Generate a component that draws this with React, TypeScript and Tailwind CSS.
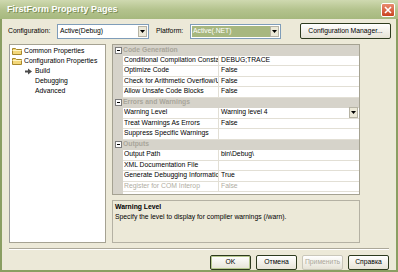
import React from 'react'

type Row =
  | { kind: 'cat'; label: string }
  | { kind: 'prop'; name: string; value: string; dim?: boolean; drop?: boolean }

const rows: Row[] = [
  { kind: 'cat', label: 'Code Generation' },
  { kind: 'prop', name: 'Conditional Compilation Constants', value: 'DEBUG;TRACE' },
  { kind: 'prop', name: 'Optimize Code', value: 'False' },
  { kind: 'prop', name: 'Check for Arithmetic Overflow/Underflow', value: 'False' },
  { kind: 'prop', name: 'Allow Unsafe Code Blocks', value: 'False' },
  { kind: 'cat', label: 'Errors and Warnings' },
  { kind: 'prop', name: 'Warning Level', value: 'Warning level 4', drop: true },
  { kind: 'prop', name: 'Treat Warnings As Errors', value: 'False' },
  { kind: 'prop', name: 'Suppress Specific Warnings', value: '' },
  { kind: 'cat', label: 'Outputs' },
  { kind: 'prop', name: 'Output Path', value: 'bin\\Debug\\' },
  { kind: 'prop', name: 'XML Documentation File', value: '' },
  { kind: 'prop', name: 'Generate Debugging Information', value: 'True' },
  { kind: 'prop', name: 'Register for COM Interop', value: 'False', dim: true },
]

function DropArrow() {
  return (
    <div className="flex h-[11px] w-[9px] items-center justify-center border border-[#b6b3a4] bg-[#ece9d8]">
      <svg width="5" height="3" viewBox="0 0 5 3">
        <path d="M0 0h5L2.5 3z" fill="#000" />
      </svg>
    </div>
  )
}

function Folder() {
  return (
    <svg width="10" height="8" viewBox="0 0 10 8" className="shrink-0">
      <path d="M0.5 1.5h3l1 1h5v5h-9z" fill="#f3d779" stroke="#a8882c" strokeWidth="1" />
      <path d="M0.5 3.5h9" stroke="#fff3c0" strokeWidth="1" />
    </svg>
  )
}

function Minus() {
  return (
    <div className="flex h-[7px] w-[7px] items-center justify-center border border-[#7b7b7b] bg-white">
      <div className="h-px w-[3px] bg-black" />
    </div>
  )
}

function XpButton({ label, disabled, primary }: { label: string; disabled?: boolean; primary?: boolean }) {
  return (
    <div
      className={`flex h-[15px] w-[41px] items-center justify-center rounded-[2px] border bg-gradient-to-b from-white to-[#e6e3d6] ${
        disabled ? 'border-[#c9c7ba] text-[#aca899]' : 'border-[#2d3a1e] text-black'
      } ${primary ? 'shadow-[inset_0_0_0_1px_#b6c88f]' : ''}`}
    >
      {label}
    </div>
  )
}

export default function App() {
  return (
    <div className="flex h-[272px] w-[398px] flex-col border-x-2 border-b-2 border-[#8a9e62] bg-[#ece9d8] font-['Liberation_Sans',Tahoma,sans-serif] text-[6.8px] leading-none text-black">
      {/* title bar */}
      <div className="-mx-[2px] flex h-[21px] items-center justify-between bg-gradient-to-b from-[#cfd9b0] via-[#b4c38e] to-[#a6b87e] pl-[7px] pr-[3px]">
        <span className="text-[9px] font-bold text-white [text-shadow:1px_1px_0_#7d8f58]">FirstForm Property Pages</span>
        <div className="flex h-[14px] w-[14px] items-center justify-center rounded-[2px] border border-white bg-gradient-to-b from-[#e98a6e] to-[#c9421e]">
          <svg width="8" height="8" viewBox="0 0 8 8">
            <path d="M1 1l6 6M7 1l-6 6" stroke="#fff" strokeWidth="1.6" />
          </svg>
        </div>
      </div>

      {/* configuration row */}
      <div className="mt-[4px] flex h-[16px] items-center pl-[6px] pr-[5px]">
        <span className="w-[49px]">Configuration:</span>
        <div className="flex h-[15px] w-[92px] items-center justify-between border border-[#7f9db9] bg-white pl-[2px] pr-px">
          <span>Active(Debug)</span>
          <DropArrow />
        </div>
        <span className="ml-[7px] w-[34px]">Platform:</span>
        <div className="flex h-[15px] w-[91px] items-center justify-between border border-[#7f9db9] bg-white p-px">
          <span className="flex h-full flex-1 items-center bg-[#a7b77f] pl-px text-white">Active(.NET)</span>
          <DropArrow />
        </div>
        <div className="ml-auto flex h-[16px] w-[91px] items-center justify-center rounded-[2px] border border-[#2d3a1e] bg-gradient-to-b from-white to-[#e6e3d6]">
          Configuration Manager...
        </div>
      </div>

      {/* main area */}
      <div className="mt-[5px] flex gap-[6px] pl-[7px]">
        {/* tree */}
        <div className="h-[199px] w-[97px] border border-[#a5a292] border-l-[#9c9c9c] bg-white pt-[1px]">
          <div className="flex h-[10px] items-center gap-[2px] pl-[2px]">
            <Folder />
            <span>Common Properties</span>
          </div>
          <div className="flex h-[10px] items-center gap-[2px] pl-[2px]">
            <Folder />
            <span>Configuration Properties</span>
          </div>
          <div className="flex h-[10px] items-center pl-[15px]">
            <svg width="8" height="7" viewBox="0 0 8 7" className="mr-[2px]">
              <path d="M0 2.5h3V0.5L7 3.5 3 6.5V4.5H0z" fill="#4b4b4b" />
            </svg>
            <span>Build</span>
          </div>
          <div className="flex h-[10px] items-center pl-[25px]">Debugging</div>
          <div className="flex h-[10px] items-center pl-[25px]">Advanced</div>
        </div>

        {/* right column */}
        <div className="flex w-[248px] flex-col">
          <div className="flex h-[151px] flex-col border border-[#a5a292] bg-white">
            {rows.map((r, i) =>
              r.kind === 'cat' ? (
                <div key={i} className="flex h-[10.5px] items-center bg-[#d6d3ca]">
                  <div className="flex w-[10px] justify-center">
                    <Minus />
                  </div>
                  <span className="font-bold text-[#a9a69b]">{r.label}</span>
                </div>
              ) : (
                <div key={i} className="flex h-[10.5px]">
                  <div className="w-[10px] shrink-0 bg-[#d6d3ca]" />
                  <div className="flex w-[96px] shrink-0 items-center border-b border-r border-[#e2dfd5] pl-[1px]">
                    <span className={`block w-full overflow-hidden whitespace-nowrap ${r.dim ? 'text-[#b0ada2]' : ''}`}>
                      {r.name}
                    </span>
                  </div>
                  <div className="flex flex-1 items-center justify-between border-b border-[#e2dfd5] pl-[2px] pr-px">
                    <span className={r.dim ? 'text-[#b0ada2]' : ''}>{r.value}</span>
                    {r.drop && <DropArrow />}
                  </div>
                </div>
              ),
            )}
            <div className="flex flex-1">
              <div className="w-[10px] bg-[#d6d3ca]" />
            </div>
          </div>

          <div className="mt-[5px] h-[43px] border border-[#b4b1a3] pl-[2px] pt-[3px]">
            <div className="font-bold">Warning Level</div>
            <div className="mt-[3px]">Specify the level to display for compiler warnings (/warn).</div>
          </div>
        </div>
      </div>

      {/* separator */}
      <div className="mx-[7px] mt-[5px] h-[2px] border-t border-b border-t-[#aca899] border-b-white" />

      {/* buttons */}
      <div className="mt-[5px] flex justify-end gap-[5px] pr-[7px]">
        <XpButton label="OK" primary />
        <XpButton label="Отмена" />
        <XpButton label="Применить" disabled />
        <XpButton label="Справка" />
      </div>
    </div>
  )
}
